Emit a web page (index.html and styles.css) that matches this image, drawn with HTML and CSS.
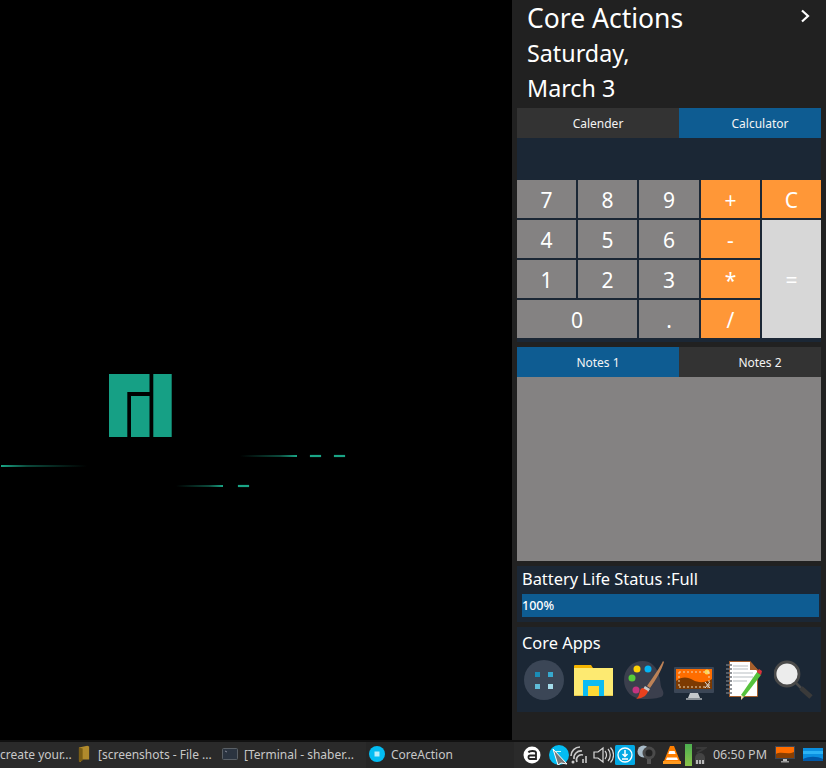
FILE: index.html
```html
<!DOCTYPE html>
<html lang="en">
<head>
<meta charset="utf-8">
<title>Core Actions</title>
<link rel="stylesheet" href="styles.css">
</head>
<body>
<div class="desktop">
  <main class="stage">
    <svg class="logo" viewBox="0 0 63 63" aria-hidden="true">
      <path d="M0 0H40.500V18H18.300V63H0Z M22 22H40.500V63H22Z M44.300 0H62.700V63H44.300Z" fill="#16a085"/>
    </svg>
    <span class="streak fade-r s1"></span>
    <span class="streak fade-l s2"></span>
    <span class="streak dash s3"></span>
    <span class="streak dash s4"></span>
    <span class="streak fade-l s5"></span>
    <span class="streak dash s6"></span>
  </main>
  <aside class="panel">
    <header class="head">
      <div class="titles">
        <div class="title">Core Actions</div>
        <div class="subtitle">Saturday,</div>
        <div class="subtitle">March 3</div>
      </div>
      <svg class="chev" viewBox="0 0 10 14" aria-hidden="true"><path d="M2 1.500 8 7 2 12.500" fill="none" stroke="#fff" stroke-width="2.200"/></svg>
    </header>
    <section class="tabs">
      <div class="tab">Calender</div>
      <div class="tab tab-right on">Calculator</div>
    </section>
    <section class="calc">
      <div class="display"></div>
      <div class="keys">
        <div class="key">7</div><div class="key">8</div><div class="key">9</div><div class="key op">+</div><div class="key op">C</div>
        <div class="key">4</div><div class="key">5</div><div class="key">6</div><div class="key op">-</div><div class="key eq">=</div>
        <div class="key">1</div><div class="key">2</div><div class="key">3</div><div class="key op">*</div>
        <div class="key zero">0</div><div class="key">.</div><div class="key op">/</div>
      </div>
    </section>
    <section class="tabs tabs-notes">
      <div class="tab on">Notes 1</div>
      <div class="tab tab-right">Notes 2</div>
    </section>
    <div class="notes"></div>
    <section class="card battery">
      <div class="label">Battery Life Status :Full</div>
      <div class="bar">100%</div>
    </section>
    <section class="card apps">
      <div class="label">Core Apps</div>
      <div class="icons">
        <svg class="app" viewBox="0 0 40 40"><circle cx="20" cy="20" r="20" fill="#3b4656"/><rect x="11" y="12" width="5" height="5" fill="#1a8cb5"/><rect x="24" y="12" width="5" height="5" fill="#37a9ce"/><rect x="11" y="24" width="5" height="5" fill="#5fbcd8"/><rect x="24" y="24" width="5" height="5" fill="#a4dcea"/></svg>
        <svg class="app" viewBox="0 0 40 40"><path d="M0 6a1 1 0 0 1 1-1h16l2 3v4H0Z" fill="#f5b400"/><path d="M0 8h39v28H0Z" fill="#fdea71"/><path d="M0 35h39v1H0Z" fill="#e6c84f"/><path d="M9 36V20h21v16h-5V26H14v10Z" fill="#0cbcf2"/><path d="M14 26h11v10H14Z" fill="#fdd835"/></svg>
        <svg class="app" viewBox="0 0 40 40"><path d="M19 1C8 1 0 9 0 20c0 11 8 19 19 19 5 0 12 0 18-2 3-1 3-5 1-8-2-4-1-7-3-13C33 7 27 1 19 1Z" fill="#3b3f4d"/><circle cx="13" cy="9" r="3.500" fill="#fdd106"/><circle cx="24" cy="9" r="3.500" fill="#03b4f4"/><circle cx="8" cy="18" r="3.500" fill="#55cc3a"/><circle cx="12" cy="30" r="3.500" fill="#c43481"/><path d="M39 1C36 7 30 16 23 26l3 2C32 20 38 9 40 2Z" fill="#bd8257"/><path d="M21 26l5 3-2 3-5-3Z" fill="#c9c9c9"/><path d="M19 28l5 3c-1 4-4 7-12 8 3-2 3-5 4-8 0-1 1-3 3-3Z" fill="#e8411e"/></svg>
        <svg class="app" viewBox="0 0 40 40"><rect x="0" y="7" width="40" height="26" rx="1" fill="#3b4656"/><rect x="2" y="9" width="36" height="20" fill="#ff6d00"/><path d="M2 21c6-5 12-4 17-1s13 3 19-1v10H2Z" fill="#7d3a02"/><circle cx="33" cy="12" r="2.500" fill="#ffd54f"/><path d="M5 12H35M5 27H35M5 12V27M35 12V27" fill="none" stroke="#ecd9b8" stroke-width="1" stroke-dasharray="2 2"/><path d="M31 22l5 6M36 22l-5 6" stroke="#ddd" stroke-width="1"/><path d="M16 33h8l2 5H14Z" fill="#c5c9cc"/><rect x="12" y="38" width="16" height="2" fill="#8a9096"/></svg>
        <svg class="app" viewBox="0 0 40 40"><path d="M5 1h21l8 9v26a1 1 0 0 1-1 1H5Z" fill="#a65f2c"/><path d="M6 2h20l7 9v25H6Z" fill="#fff"/><path d="M26 1l8 9h-8Z" fill="#a65f2c"/><path d="M9 6h15M9 9h15M9 13h20M9 17h20M9 21h14" stroke="#cfd3d6" stroke-width="1.500"/><path d="M2 5h6M2 9h6M2 13h6M2 17h6M2 21h6M2 25h6M2 29h6M2 33h6" stroke="#6d7278" stroke-width="1.500"/><path d="M33 12l4 3-17 22-3-2Z" fill="#56c13c"/><path d="M17 35l3 2-3 3Z" fill="#e8d7a8"/><path d="M33 12l2-3 3 2-1 4Z" fill="#d8333b"/></svg>
        <svg class="app" viewBox="0 0 40 40"><circle cx="13" cy="14" r="12" fill="#ececec" stroke="#4a4a4a" stroke-width="2.800"/><path d="M22 23l5 5" stroke="#4a4a4a" stroke-width="2.500"/><path d="M27 28l10 9" stroke="#3a3a3a" stroke-width="5"/></svg>
      </div>
    </section>
  </aside>
  <footer class="taskbar">
    <div class="windows">
      <div class="win win-first"><span class="cap">create your...</span></div>
      <div class="win win-file"><svg class="wi" viewBox="0 0 14 18"><path d="M1 2l9-2 2 1v14l-8 0-1 3-2-2Z" fill="#b08a2c"/><path d="M1 2l4 1v13l-4 2Z" fill="#7a5d15"/></svg><span class="cap">[screenshots - File ...</span></div>
      <div class="win win-term"><svg class="wi wi-term" viewBox="0 0 16 12"><rect x=".5" y=".5" width="15" height="11" rx="1" fill="#2b3440" stroke="#5a6066"/><path d="M3 3l2 1" stroke="#aab" stroke-width=".7"/></svg><span class="cap">[Terminal - shaber...</span></div>
      <div class="win win-active"><svg class="wi wi-core" viewBox="0 0 16 16"><circle cx="8" cy="8" r="8" fill="#03bdf3"/><rect x="5.500" y="5.500" width="5" height="5" fill="#b8eefb"/></svg><span class="cap">CoreAction</span></div>
    </div>
    <div class="tray">
      <svg class="ti" viewBox="0 0 20 20"><circle cx="9" cy="10" r="8.500" fill="#fff"/><path d="M5.500 7.500c1-2 7-2 7.500 0v6.500H7c-2 0-2-3.500 0-3.500h6" fill="none" stroke="#222" stroke-width="1.800"/></svg>
      <svg class="ti ti-cursor" viewBox="0 0 20 20"><circle cx="10" cy="10" r="10" fill="#03bdf3"/><path d="M6 6h6v1H7v3l-1 1Z" fill="#bff"/><path d="M4 4l14 15-6-1-3 2Z" fill="#777" stroke="#fff" stroke-width="1"/></svg>
      <svg class="ti" viewBox="0 0 20 20"><g fill="none" stroke="#c9c9c9" stroke-width="1.600"><path d="M2 11a9 9 0 0 1 9-9"/><path d="M5 14a7 7 0 0 1 8-8"/><path d="M8 17a5 5 0 0 1 6-7"/><path d="M14 14v4M17 11v7"/></g><circle cx="4" cy="17" r="1.500" fill="#c9c9c9"/></svg>
      <svg class="ti ti-sound" viewBox="0 0 21 20"><g fill="none" stroke="#d8d8d8" stroke-width="1.200"><path d="M1 7h4l5-4v14l-5-4H1Z"/><path d="M12 6c2 2 2 6 0 8M15 4c3 3 3 9 0 12M17.500 2.500c4 4 4 11 0 15"/></g></svg>
      <svg class="ti" viewBox="0 0 20 20"><rect width="20" height="20" rx="1.500" fill="#03a9e4"/><circle cx="10" cy="10" r="7" fill="none" stroke="#fff" stroke-width="1.300"/><path d="M10 5v6M7.500 9l2.500 2.500L12.500 9M7 14h6" fill="none" stroke="#fff" stroke-width="1.500"/></svg>
      <svg class="ti" viewBox="0 0 20 20"><circle cx="6.500" cy="6.500" r="6" fill="#a9bcc9"/><circle cx="12" cy="8" r="6.500" fill="#4a4a4a"/><circle cx="12" cy="8" r="3.500" fill="#222"/><rect x="10" y="14" width="4" height="5" fill="#555"/></svg>
      <svg class="ti ti-vlc" viewBox="0 0 20 20"><path d="M8 1h4l6 15H2Z" fill="#ff7f00"/><path d="M7.400 6h5.200l1 3H6.300ZM5 12.500h10l1 2.500H4Z" fill="#fff"/><rect x="1" y="16" width="18" height="3" fill="#ff9a1f"/></svg>
      <div class="ti-batt"><span class="batt"></span><svg class="ti-head" viewBox="0 0 14 20"><path d="M3 3h9L4 8" fill="none" stroke="#3a3a3a" stroke-width="2"/><path d="M2 19v-6a5 5 0 0 1 10 0v6" fill="#444"/><path d="M4 15v4M7 15v4M10 15v4" stroke="#ddd" stroke-width="1.500"/></svg></div>
      <span class="clock">06:50 PM</span>
      <svg class="ti ti-mon" viewBox="0 0 20 20"><rect y="1" width="20" height="13" fill="#3b4656"/><rect x="1" y="2" width="18" height="11" fill="#ff6d00"/><path d="M1 9c5-3 12 1 18-2v6H1Z" fill="#8a3f02"/><path d="M8 14h4v2H8Z" fill="#bbb"/><rect x="6" y="16" width="8" height="1.500" fill="#999"/></svg>
      <svg class="ti ti-wall" viewBox="0 0 20 14"><rect width="20" height="13" fill="#0a8fe0"/><path d="M0 3h20v3H0Z" fill="#2bb3f5"/><path d="M0 11c6-3 14-3 20 0v2H0Z" fill="#0058a8"/></svg>
    </div>
  </footer>
</div>
</body>
</html>
```
FILE: styles.css
```css
* { box-sizing: border-box; }
html, body { margin: 0; height: 100%; overflow: hidden; }
body { background: #000; font-family: "Noto Sans", sans-serif; color: #fff; }

.desktop { width: 826px; height: 768px; display: grid; grid-template-columns: 512px 314px; grid-template-rows: 740px 28px; }

.stage { position: relative; background: #000; }
.logo { position: absolute; left: 109px; top: 374px; width: 63px; height: 63px; }
.streak { position: absolute; height: 2px; background: #1aa586; }
.dash { box-shadow: 0 0 1px #16a085; }
.fade-r { background: linear-gradient(to right, #1aa586, rgba(26,165,134,.45) 30%, transparent); }
.fade-l { background: linear-gradient(to left, #1aa586, rgba(26,165,134,.45) 30%, transparent); }
.s1 { left: 1px; top: 465px; width: 86px; }
.s2 { left: 240px; top: 455px; width: 57px; }
.s3 { left: 310px; top: 455px; width: 11px; }
.s4 { left: 334px; top: 455px; width: 11px; }
.s5 { left: 176px; top: 485px; width: 47px; }
.s6 { left: 238px; top: 485px; width: 11px; }

.panel { background: #212121; padding: 0 5px; display: flex; flex-direction: column; }
.head { height: 108px; flex: none; display: flex; justify-content: space-between; padding: 0 11px 0 10px; }
.title { font-size: 26.500px; line-height: 36px; white-space: nowrap; }
.subtitle { font-size: 23.300px; line-height: 35px; white-space: nowrap; }
.chev { width: 10px; height: 14px; margin-top: 9px; }

.tabs { display: grid; grid-template-columns: 162px 142px; height: 30px; flex: none; }
.tab { background: #333; font-size: 12px; display: flex; align-items: center; justify-content: center; color: #f4f4f4; }
.tab.on { background: #0e5c92; }
.tab-right { padding-left: 20px; }

.calc { background: #1b2735; height: 204px; padding-bottom: 4px; flex: none; }
.display { height: 42px; }
.keys { display: grid; grid-template-columns: 59px 59px 60px 59px 59px; grid-auto-rows: 38px; gap: 2px; }
.key { background: #848282; font-size: 21px; display: flex; align-items: center; justify-content: center; padding-top: 1px; }
.key.op { background: #ff9737; }
.key.eq { background: #d7d7d7; grid-column: 5; grid-row: 2 / span 3; }
.key.zero { grid-column: span 2; }

.tabs-notes { margin-top: 5px; }
.notes { height: 184px; background: #848282; flex: none; }

.card { background: #1b2735; padding: 0 5px; flex: none; }
.label { font-size: 16.400px; line-height: 22px; white-space: nowrap; }
.battery { height: 56px; margin-top: 5px; padding-top: 2px; padding-right: 2px; }
.bar { height: 23px; margin-top: 4px; background: #0e5c92; font-size: 12.500px; font-weight: 500; line-height: 23px; }
.apps { height: 85px; margin-top: 5px; padding-top: 5px; }
.icons { display: flex; gap: 10px; margin-top: 6px; padding-left: 2px; }
.app { width: 40px; height: 40px; flex: none; }

.taskbar { grid-column: 1 / span 2; background: #2a2a2a; border-top: 2px solid #111; display: flex; justify-content: space-between; font-size: 12px; color: #c8c8c8; }
.windows { display: flex; }
.win { display: flex; align-items: center; gap: 6px; white-space: nowrap; height: 100%; padding-bottom: 2px; }
.win-first { width: 78px; }
.win-file { width: 144px; gap: 7px; }
.win-term { width: 144px; }
.win-active { width: 148px; padding-left: 3px; background: #262626; gap: 6px; }
.wi { width: 13px; height: 18px; flex: none; }
.wi-term { width: 16px; height: 12px; }
.wi-core { width: 16px; height: 16px; }
.tray { display: flex; align-items: center; gap: 2px; padding-right: 3px; }
.ti { width: 20px; height: 20px; flex: none; }
.ti-cursor { margin-left: 4px; margin-right: -2px; }
.ti-sound { width: 21px; margin-left: 2px; margin-right: -1px; }
.ti-vlc { margin-left: 3px; }
.ti-batt { display: flex; align-items: center; gap: 1px; margin-left: 1px; }
.batt { width: 7px; height: 22px; background: linear-gradient(#4caf50, #8bc34a); }
.ti-head { width: 14px; height: 20px; }
.clock { margin: 0 6px 0 4px; white-space: nowrap; font-size: 12.500px; padding-bottom: 1px; }
.ti-wall { width: 20px; height: 14px; margin-left: 6px; }
```
